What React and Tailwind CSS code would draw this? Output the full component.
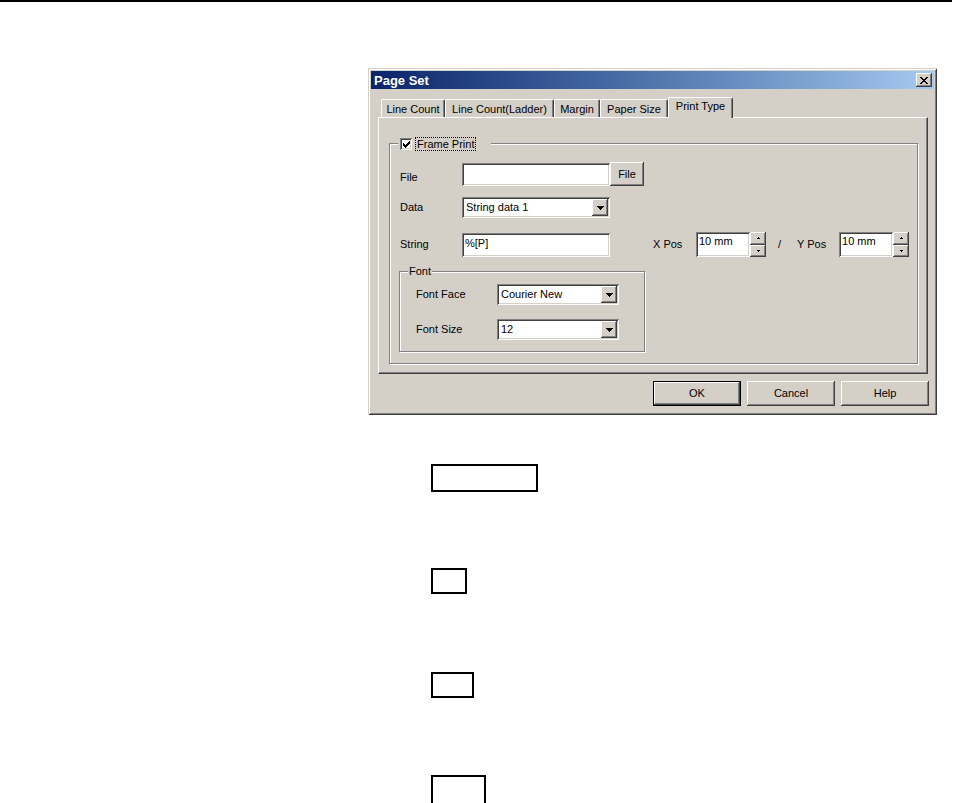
import React from 'react';

// classic 3D bevels
const raised =
  'bg-[#d4d0c8] shadow-[inset_-1px_-1px_0_#404040,inset_1px_1px_0_#fff,inset_-2px_-2px_0_#808080]';
const sunken =
  'bg-white shadow-[inset_1px_1px_0_#808080,inset_-1px_-1px_0_#fff,inset_2px_2px_0_#404040,inset_-2px_-2px_0_#d4d0c8]';
const etched = 'border border-[#808080] shadow-[1px_1px_0_#fff,inset_1px_1px_0_#fff]';

const DownArrow = () => (
  <svg width="7" height="4" viewBox="0 0 7 4" shapeRendering="crispEdges">
    <path d="M0 0h7v1H0zM1 1h5v1H1zM2 2h3v1H2zM3 3h1v1H3z" fill="#000" />
  </svg>
);

const TinyUp = () => (
  <svg width="3" height="2" viewBox="0 0 3 2" shapeRendering="crispEdges">
    <path d="M1 0h1v1H1zM0 1h3v1H0z" fill="#000" />
  </svg>
);

const TinyDown = () => (
  <svg width="3" height="2" viewBox="0 0 3 2" shapeRendering="crispEdges">
    <path d="M0 0h3v1H0zM1 1h1v1H1z" fill="#000" />
  </svg>
);

const CloseGlyph = () => (
  <svg width="8" height="7" viewBox="0 0 8 7" shapeRendering="crispEdges">
    <path
      d="M0 0h2v1H0zM6 0h2v1H6zM1 1h2v1H1zM5 1h2v1H5zM2 2h4v1H2zM3 3h2v1H3zM2 4h4v1H2zM1 5h2v1H1zM5 5h2v1H5zM0 6h2v1H0zM6 6h2v1H6z"
      fill="#000"
    />
  </svg>
);

const CheckGlyph = () => (
  <svg width="7" height="7" viewBox="0 0 7 7" shapeRendering="crispEdges">
    <path
      d="M6 0h1v1H6zM5 1h2v1H5zM0 2h1v1H0zM4 2h3v1H4zM0 3h2v1H0zM3 3h3v1H3zM0 4h5v1H0zM1 5h3v1H1zM2 6h1v1H2z"
      fill="#000"
    />
  </svg>
);

const Combo = ({ value, width }) => (
  <div className={`${sunken} ${width} h-[21px] flex p-[2px]`}>
    <span className="flex-1 pl-[2px] leading-[17px]">{value}</span>
    <div className={`${raised} w-[16px] h-[17px] flex items-center justify-center`}>
      <DownArrow />
    </div>
  </div>
);

const Spin = () => (
  <div className="w-[16px] h-[25px] flex flex-col">
    <div className={`${raised} flex-1 flex items-center justify-center`}>
      <TinyUp />
    </div>
    <div className={`${raised} flex-1 flex items-center justify-center`}>
      <TinyDown />
    </div>
  </div>
);

const PosField = ({ value }) => (
  <div className="flex">
    <div className={`${sunken} w-[54px] h-[25px] pl-[3px] pt-[3px] leading-[13px]`}>{value}</div>
    <Spin />
  </div>
);

const tabs = [
  { label: 'Line Count', width: 'w-[64px]' },
  { label: 'Line Count(Ladder)', width: 'w-[109px]' },
  { label: 'Margin', width: 'w-[46px]' },
  { label: 'Paper Size', width: 'w-[68px]' },
];

function PageSetDialog() {
  return (
    <div className="w-[569px] h-[347px] bg-[#d4d0c8] p-[3px] flex flex-col shadow-[inset_1px_1px_0_#d4d0c8,inset_-1px_-1px_0_#404040,inset_2px_2px_0_#fff,inset_-2px_-2px_0_#808080]">
      {/* title bar */}
      <div className="h-[18px] flex items-center justify-between pl-[3px] pr-[2px] bg-gradient-to-r from-[#0a246a] to-[#a6caf0]">
        <span className="text-white font-bold text-[13px] leading-none">Page Set</span>
        <div className={`${raised} w-[16px] h-[14px] flex items-center justify-center`}>
          <CloseGlyph />
        </div>
      </div>

      {/* tabs */}
      <div className="mt-[6px] h-[22px] flex items-end pl-[10px]">
        {tabs.map((t) => (
          <div
            key={t.label}
            className={`${t.width} h-[18px] pt-[1px] flex items-center justify-center border-t border-l border-r border-t-white border-l-white border-r-[#404040] rounded-t-[2px] shadow-[inset_-1px_0_0_#808080]`}
          >
            {t.label}
          </div>
        ))}
        <div className="w-[65px] h-[21px] -mb-[1px] relative z-10 bg-[#d4d0c8] flex items-center justify-center pb-[3px] border-t border-l border-r border-t-white border-l-white border-r-[#404040] rounded-t-[2px] shadow-[inset_-1px_0_0_#808080]">
          Print Type
        </div>
      </div>

      {/* tab page */}
      <div className="ml-[7px] w-[550px] h-[257px] border border-t-white border-l-white border-r-[#404040] border-b-[#404040] shadow-[inset_-1px_-1px_0_#808080]">
        <div className={`${etched} relative mt-[25px] ml-[10px] w-[529px] h-[221px] pl-[10px] pt-[18px]`}>
          <div className="absolute -top-[7px] left-[8px] w-[93px] h-[14px] bg-[#d4d0c8] flex items-center pl-[2px] gap-[3px]">
            <div className={`${sunken} w-[12px] h-[12px] flex items-center justify-center`}>
              <CheckGlyph />
            </div>
            <span className="border border-dotted border-black px-[1px] leading-[12px]">Frame Print</span>
          </div>

          <div className="h-[24px] flex items-center">
            <span className="w-[62px] pt-[7px]">File</span>
            <div className={`${sunken} w-[148px] h-[23px]`} />
            <div className={`${raised} w-[34px] h-[24px] flex items-center justify-center`}>File</div>
          </div>

          <div className="mt-[11px] h-[21px] flex items-center">
            <span className="w-[62px]">Data</span>
            <Combo value="String data 1" width="w-[148px]" />
          </div>

          <div className="mt-[14px] h-[25px] flex items-center">
            <span className="w-[62px]">String</span>
            <div className={`${sunken} w-[148px] h-[24px] pl-[3px] pt-[4px] leading-[13px]`}>%[P]</div>
            <span className="ml-[43px] w-[43px]">X Pos</span>
            <PosField value="10 mm" />
            <span className="ml-[12px]">/</span>
            <span className="ml-[16px] w-[42px]">Y Pos</span>
            <PosField value="10 mm" />
          </div>

          <div className={`${etched} relative mt-[14px] -ml-[1px] w-[246px] h-[81px] pl-[16px] pt-[12px]`}>
            <span className="absolute -top-[7px] left-[8px] px-[1px] bg-[#d4d0c8] leading-[13px]">Font</span>
            <div className="h-[21px] flex items-center">
              <span className="w-[81px]">Font Face</span>
              <Combo value="Courier New" width="w-[122px]" />
            </div>
            <div className="mt-[14px] h-[21px] flex items-center">
              <span className="w-[81px]">Font Size</span>
              <Combo value="12" width="w-[122px]" />
            </div>
          </div>
        </div>
      </div>

      {/* dialog buttons */}
      <div className="mt-[7px] flex justify-end gap-[6px] pr-[5px]">
        <div className="w-[88px] h-[25px] border border-black">
          <div className={`${raised} w-full h-full flex items-center justify-center`}>OK</div>
        </div>
        <div className={`${raised} w-[88px] h-[25px] flex items-center justify-center`}>Cancel</div>
        <div className={`${raised} w-[88px] h-[25px] flex items-center justify-center`}>Help</div>
      </div>
    </div>
  );
}

export default function App() {
  return (
    <div className="w-[964px] h-[803px] bg-white overflow-hidden text-[11px] text-black font-['Liberation_Sans',Arial,sans-serif]">
      <div className="h-[2px] w-[952px] bg-black" />
      <div className="pl-[368px] pt-[66px]">
        <PageSetDialog />
        <div className="pl-[63px] flex flex-col items-start">
          <div className="mt-[49px] w-[107px] h-[28px] border-2 border-black" />
          <div className="mt-[76px] w-[36px] h-[26px] border-2 border-black" />
          <div className="mt-[78px] w-[43px] h-[26px] border-2 border-black" />
          <div className="mt-[77px] w-[55px] h-[30px] border-2 border-black" />
        </div>
      </div>
    </div>
  );
}
